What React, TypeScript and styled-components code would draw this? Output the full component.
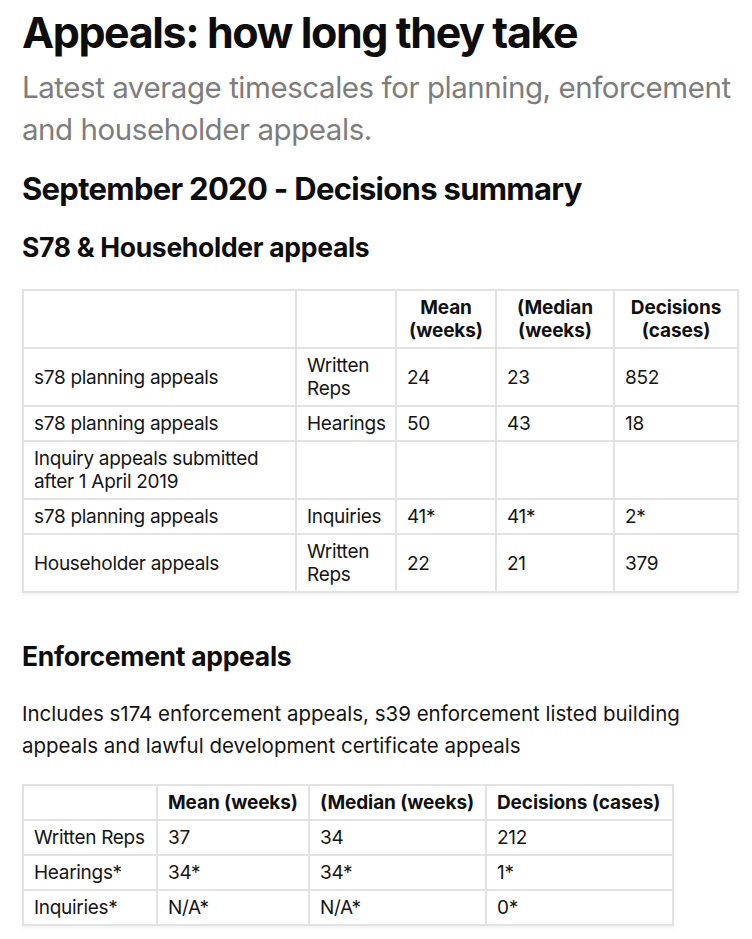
import React from "react";
import styled, { createGlobalStyle } from "styled-components";

const Global = createGlobalStyle`
  html, body { margin: 0; padding: 0; background: #ffffff; }
  body { font-family: Inter, "Noto Sans", Roboto, sans-serif; color: #111111; }
`;

const Page = styled.main`
  padding: 4px 15px 30px 22px;
  display: flex;
  flex-direction: column;
`;

const Title = styled.h1`
  margin: 0;
  font-size: 43px;
  line-height: 56px;
  font-weight: 700;
  letter-spacing: -1.4px;
  color: #0d0d0d;
`;

const Lead = styled.p`
  margin: 6px 0 0;
  font-size: 29.5px;
  line-height: 42px;
  font-weight: 400;
  letter-spacing: -0.45px;
  color: #7d7d7d;
`;

const SectionTitle = styled.h2`
  margin: 19px 0 0;
  font-size: 31px;
  line-height: 40px;
  font-weight: 700;
  letter-spacing: -0.7px;
  color: #0d0d0d;
`;

const SubTitle = styled.h3<{ $gap: number }>`
  margin: ${(p) => p.$gap}px 0 0;
  font-size: 26.5px;
  line-height: 34px;
  font-weight: 700;
  letter-spacing: -0.3px;
  color: #0d0d0d;
`;

const Body = styled.p`
  margin: 25px 0 0;
  font-size: 20.5px;
  line-height: 32px;
  letter-spacing: 0;
  color: #141414;
`;

const Table = styled.table<{ $full?: boolean; $gap: number }>`
  margin-top: ${(p) => p.$gap}px;
  width: ${(p) => (p.$full ? "100%" : "auto")};
  align-self: ${(p) => (p.$full ? "stretch" : "flex-start")};
  border-collapse: collapse;
  table-layout: fixed;
  box-shadow: 0 2px 3px rgba(0, 0, 0, 0.06);
`;

const HeadCell = styled.th<{ $center?: boolean }>`
  border: 2px solid #e3e3e3;
  padding: 5px 10px;
  font-size: 19px;
  line-height: 23px;
  font-weight: 700;
  letter-spacing: -0.1px;
  text-align: ${(p) => (p.$center ? "center" : "left")};
  vertical-align: middle;
  white-space: ${(p) => (p.$center ? "normal" : "nowrap")};
  color: #111111;
`;

const Cell = styled.td`
  border: 2px solid #e3e3e3;
  padding: 5px 10px;
  font-size: 19px;
  line-height: 23px;
  font-weight: 400;
  letter-spacing: -0.3px;
  text-align: left;
  vertical-align: middle;
  color: #151515;
`;

const Col = styled.col<{ $w: number }>`
  width: ${(p) => p.$w}px;
`;

const s78Rows: [string, string, string, string, string][] = [
  ["s78 planning appeals", "Written Reps", "24", "23", "852"],
  ["s78 planning appeals", "Hearings", "50", "43", "18"],
  ["Inquiry appeals submitted after 1 April 2019", "", "", "", ""],
  ["s78 planning appeals", "Inquiries", "41*", "41*", "2*"],
  ["Householder appeals", "Written Reps", "22", "21", "379"],
];

const enfRows: [string, string, string, string][] = [
  ["Written Reps", "37", "34", "212"],
  ["Hearings*", "34*", "34*", "1*"],
  ["Inquiries*", "N/A*", "N/A*", "0*"],
];

export default function App() {
  return (
    <>
      <Global />
      <Page>
        <Title>Appeals: how long they take</Title>
        <Lead>
          Latest average timescales for planning, enforcement and householder
          appeals.
        </Lead>
        <SectionTitle>September 2020 - Decisions summary</SectionTitle>
        <SubTitle $gap={21}>S78 &amp; Householder appeals</SubTitle>
        <Table $full $gap={25}>
          <colgroup>
            <Col $w={273} />
            <Col $w={100} />
            <Col $w={100} />
            <Col $w={118} />
            <Col $w={124} />
          </colgroup>
          <thead>
            <tr>
              <HeadCell $center />
              <HeadCell $center />
              <HeadCell $center>Mean (weeks)</HeadCell>
              <HeadCell $center>(Median (weeks)</HeadCell>
              <HeadCell $center>Decisions (cases)</HeadCell>
            </tr>
          </thead>
          <tbody>
            {s78Rows.map((r, i) => (
              <tr key={i}>
                {r.map((c, j) => (
                  <Cell key={j}>{c}</Cell>
                ))}
              </tr>
            ))}
          </tbody>
        </Table>
        <SubTitle $gap={46}>Enforcement appeals</SubTitle>
        <Body>
          Includes s174 enforcement appeals, s39 enforcement listed building
          appeals and lawful development certificate appeals
        </Body>
        <Table $gap={22}>
          <colgroup>
            <Col $w={134} />
            <Col $w={152} />
            <Col $w={177} />
            <Col $w={187} />
          </colgroup>
          <thead>
            <tr>
              <HeadCell />
              <HeadCell>Mean (weeks)</HeadCell>
              <HeadCell>(Median (weeks)</HeadCell>
              <HeadCell>Decisions (cases)</HeadCell>
            </tr>
          </thead>
          <tbody>
            {enfRows.map((r, i) => (
              <tr key={i}>
                {r.map((c, j) => (
                  <Cell key={j}>{c}</Cell>
                ))}
              </tr>
            ))}
          </tbody>
        </Table>
      </Page>
    </>
  );
}
